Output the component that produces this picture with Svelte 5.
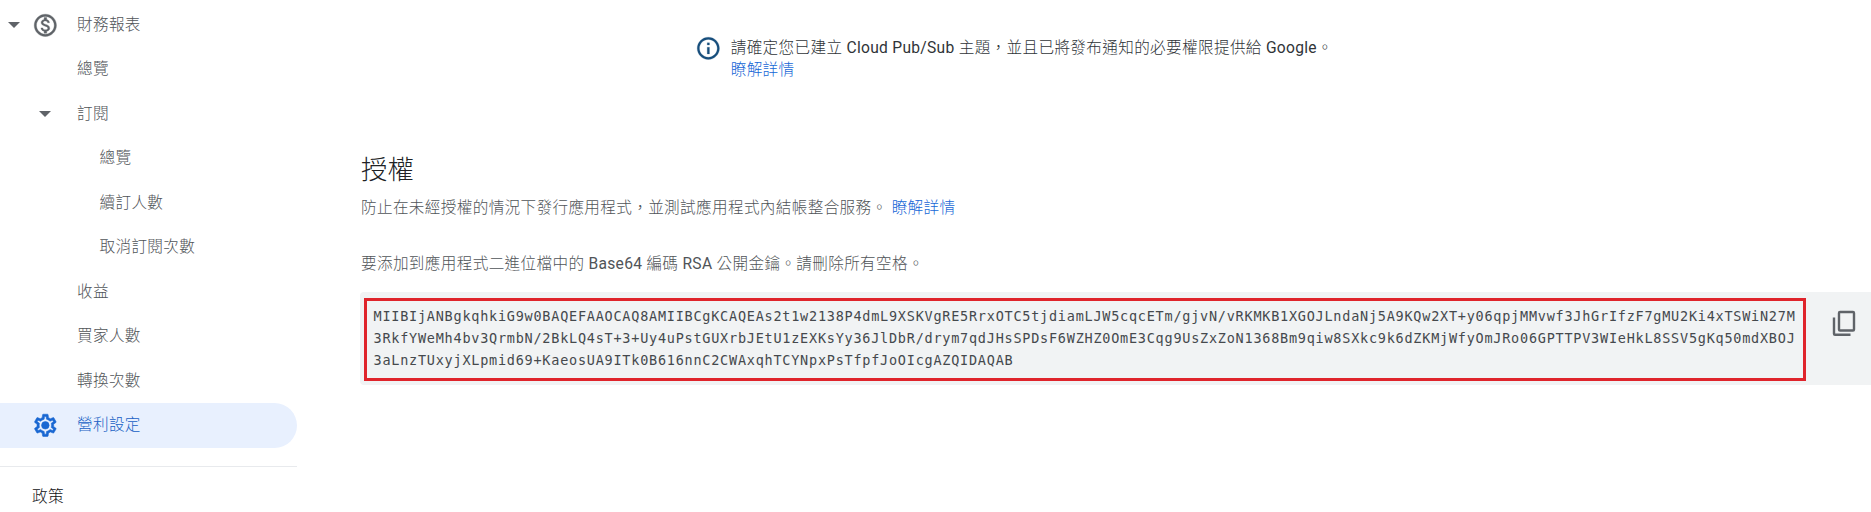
<script>
  const items = [
    { label: '財務報表', level: 0, icon: 'money', arrow: true },
    { label: '總覽', level: 0 },
    { label: '訂閱', level: 0, arrowInner: true },
    { label: '總覽', level: 1 },
    { label: '續訂人數', level: 1 },
    { label: '取消訂閱次數', level: 1 },
    { label: '收益', level: 0 },
    { label: '買家人數', level: 0 },
    { label: '轉換次數', level: 0 },
    { label: '營利設定', level: 0, icon: 'gear', active: true }
  ];
  const keyLines = [
    'MIIBIjANBgkqhkiG9w0BAQEFAAOCAQ8AMIIBCgKCAQEAs2t1w2138P4dmL9XSKVgRE5RrxOTC5tjdiamLJW5cqcETm/gjvN/vRKMKB1XGOJLndaNj5A9KQw2XT+y06qpjMMvwf3JhGrIfzF7gMU2Ki4xTSWiN27M',
    '3RkfYWeMh4bv3QrmbN/2BkLQ4sT+3+Uy4uPstGUXrbJEtU1zEXKsYy36JlDbR/drym7qdJHsSPDsF6WZHZ0OmE3Cqg9UsZxZoN1368Bm9qiw8SXkc9k6dZKMjWfyOmJRo06GPTTPV3WIeHkL8SSV5gKq50mdXBOJ',
    '3aLnzTUxyjXLpmid69+KaeosUA9ITk0B616nnC2CWAxqhTCYNpxPsTfpfJoOIcgAZQIDAQAB'
  ];
</script>

<div class="page" lang="zh-Hant">
  <nav class="sidebar">
    {#each items as item}
      <div class="item" class:active={item.active}>
        <span class="expander">
          {#if item.arrow}
            <svg width="12" height="6" viewBox="0 0 12 6"><path d="M0 0h12L6 6z" /></svg>
          {/if}
        </span>
        <span class="glyph">
          {#if item.icon === 'money'}
            <svg class="coin" width="26.7" height="26.7" viewBox="0 0 24 24">
              <path d="M12 2C6.48 2 2 6.48 2 12s4.48 10 10 10 10-4.48 10-10S17.52 2 12 2zm0 18c-4.41 0-8-3.59-8-8s3.59-8 8-8 8 3.59 8 8-3.59 8-8 8zm.31-8.86c-1.77-.45-2.34-.94-2.34-1.67 0-.84.79-1.43 2.1-1.43 1.38 0 1.9.66 1.94 1.64h1.71c-.05-1.34-.87-2.57-2.49-2.97V5H10.9v1.69c-1.51.32-2.72 1.3-2.72 2.81 0 1.79 1.49 2.69 3.66 3.21 1.95.46 2.34 1.15 2.34 1.87 0 .53-.39 1.39-2.1 1.39-1.6 0-2.23-.72-2.32-1.64H8.04c.1 1.7 1.36 2.66 2.86 2.97V19h2.34v-1.67c1.52-.29 2.72-1.16 2.73-2.77-.01-2.2-1.9-2.96-3.66-3.42z" />
            </svg>
          {:else if item.icon === 'gear'}
            <svg class="gear" width="26.7" height="26.7" viewBox="0 0 24 24">
              <path d="M19.43 12.98c.04-.32.07-.64.07-.98 0-.34-.03-.66-.07-.98l2.11-1.65c.19-.15.24-.42.12-.64l-2-3.46c-.09-.16-.26-.25-.44-.25-.06 0-.12.01-.17.03l-2.49 1c-.52-.4-1.08-.73-1.69-.98l-.38-2.65C14.46 2.18 14.25 2 14 2h-4c-.25 0-.46.18-.49.42l-.38 2.65c-.61.25-1.17.59-1.69.98l-2.49-1c-.06-.02-.12-.03-.18-.03-.17 0-.34.09-.43.25l-2 3.46c-.13.22-.07.49.12.64l2.11 1.65c-.04.32-.07.65-.07.98 0 .33.03.66.07.98l-2.11 1.65c-.19.15-.24.42-.12.64l2 3.46c.09.16.26.25.44.25.06 0 .12-.01.17-.03l2.49-1c.52.4 1.08.73 1.69.98l.38 2.65c.03.24.24.42.49.42h4c.25 0 .46-.18.49-.42l.38-2.65c.61-.25 1.17-.59 1.69-.98l2.49 1c.06.02.12.03.18.03.17 0 .34-.09.43-.25l2-3.46c.12-.22.07-.49-.12-.64l-2.11-1.65zm-1.98-1.71c.04.31.05.52.05.73 0 .21-.02.43-.05.73l-.14 1.13.89.7 1.08.84-.7 1.21-1.27-.51-1.04-.42-.9.68c-.43.32-.84.56-1.25.73l-1.06.43-.16 1.13-.2 1.35h-1.4l-.19-1.35-.16-1.13-1.06-.43c-.43-.18-.83-.41-1.23-.71l-.91-.7-1.06.43-1.27.51-.7-1.21 1.08-.84.89-.7-.14-1.13c-.03-.31-.05-.54-.05-.74s.02-.43.05-.73l.14-1.13-.89-.7-1.08-.84.7-1.21 1.27.51 1.04.42.9-.68c.43-.32.84-.56 1.25-.73l1.06-.43.16-1.13.2-1.35h1.39l.19 1.35.16 1.13 1.06.43c.43.18.83.41 1.23.71l.91.7 1.06-.43 1.27-.51.7 1.21-1.07.85-.89.7.14 1.13z" />
              <circle cx="12" cy="12" r="3.4" />
            </svg>
          {:else if item.arrowInner}
            <svg width="12" height="6" viewBox="0 0 12 6"><path d="M0 0h12L6 6z" /></svg>
          {/if}
        </span>
        <span class="label" class:nested={item.level === 1}>{item.label}</span>
      </div>
    {/each}
    <div class="section">政策</div>
  </nav>

  <main>
    <div class="notice">
      <svg width="26.7" height="26.7" viewBox="0 0 24 24">
        <path d="M11 7h2v2h-2zm0 4h2v6h-2zm1-9C6.480 2 2 6.480 2 12s4.480 10 10 10 10-4.480 10-10S17.520 2 12 2zm0 18c-4.410 0-8-3.590-8-8s3.590-8 8-8 8 3.590 8 8-3.590 8-8 8z" />
      </svg>
      <div class="message">
        <div>請確定您已建立 <span class="latin">Cloud Pub/Sub</span> 主題，並且已將發布通知的必要權限提供給 <span class="latin">Google</span>。</div>
        <a href="#pubsub">瞭解詳情</a>
      </div>
    </div>

    <h2>授權</h2>
    <p class="desc">防止在未經授權的情況下發行應用程式，並測試應用程式內結帳整合服務。 <a href="#licensing">瞭解詳情</a></p>
    <p class="hint">要添加到應用程式二進位檔中的 <span class="latin">Base64</span> 編碼 <span class="latin">RSA</span> 公開金鑰。請刪除所有空格。</p>

    <div class="keybox">
      <div class="key">
        {#each keyLines as line}
          <div>{line}</div>
        {/each}
      </div>
      <svg class="copy" width="24" height="27" viewBox="0 0 24 27">
        <rect x="7" y="2" width="15" height="18.5" rx="1" />
        <path d="M2 7.500v16.200q0 1 1 1h15.500" />
      </svg>
    </div>
  </main>
</div>

<style>
  :global(body) {
    background: #fff;
    overflow: hidden;
  }
  .page {
    display: grid;
    grid-template-columns: 297px 1fr;
    height: 512px;
    overflow: hidden;
    font-family: Roboto, 'Noto Sans CJK TC', sans-serif;
    font-size: 15.6px;
    font-weight: 300;
    letter-spacing: 0.36px;
    color: #505458;
  }
  .latin {
    font-weight: 400;
    letter-spacing: 0.28px;
  }
  .sidebar {
    padding-top: 2.3px;
  }
  .item {
    display: flex;
    align-items: center;
    height: 44.55px;
    fill: #5f6368;
  }
  .active {
    background: #e8f0fe;
    border-radius: 0 23px 23px 0;
    color: #175fc4;
    fill: #1967d2;
  }
  .expander {
    display: flex;
    width: 24px;
    padding-left: 8px;
    box-sizing: border-box;
  }
  .glyph {
    display: flex;
    justify-content: center;
    width: 42px;
  }
  .coin {
    stroke: #5f6368;
    stroke-width: 0.3;
    margin-top: 1px;
  }
  .gear {
    stroke: #1967d2;
    stroke-width: 0.5;
  }
  .label {
    padding-left: 11px;
    line-height: 22px;
  }
  .nested {
    padding-left: 33.5px;
  }
  .section {
    margin-top: 18px;
    padding: 19px 0 0 32px;
    border-top: 1px solid #e8eaed;
    line-height: 22px;
    color: #101114;
  }
  main {
    display: flex;
    flex-direction: column;
    padding: 35px 0 0 64px;
  }
  a {
    color: #1666d6;
    text-decoration: none;
  }
  .notice {
    display: flex;
    gap: 9px;
    height: 113px;
    margin-left: 334px;
    line-height: 22px;
    color: #303438;
  }
  .message {
    padding-top: 2px;
  }
  .notice svg {
    fill: #174e7c;
    stroke: #174e7c;
    stroke-width: 0.2;
  }
  h2 {
    margin: 0;
    height: 48px;
    line-height: 44px;
    font-size: 26.3px;
    font-weight: 300;
    letter-spacing: 0.2px;
    color: #202124;
  }
  p {
    margin: 0;
    line-height: 24px;
    white-space: nowrap;
  }
  .desc {
    height: 56px;
  }
  .hint {
    height: 40px;
  }
  .keybox {
    display: flex;
    box-sizing: border-box;
    height: 93px;
    margin-left: -1px;
    padding: 6px 0 0 4px;
    background: #f1f3f4;
    border-radius: 4px 0 0 4px;
  }
  .key {
    box-sizing: border-box;
    width: 1442px;
    height: 83px;
    padding: 4px 0 0 6.5px;
    border: 3px solid #df242b;
    font-family: 'DejaVu Sans Mono', monospace;
    font-size: 13.5px;
    line-height: 22px;
    letter-spacing: 0.76px;
    white-space: pre;
    color: #45494d;
  }
  .copy {
    margin: 12px 0 0 26px;
    fill: none;
    stroke: #5f6368;
    stroke-width: 2.4;
  }
</style>
